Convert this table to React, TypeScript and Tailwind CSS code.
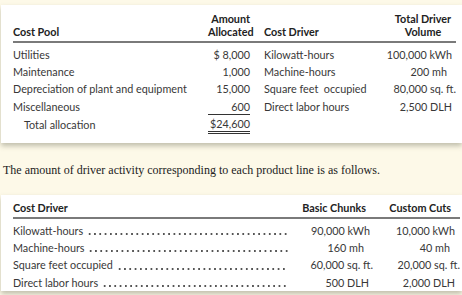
const costPools = [
  { pool: "Utilities", amount: "$ 8,000", driver: "Kilowatt-hours", volume: "100,000 kWh", volPad: "pr-[4px]" },
  { pool: "Maintenance", amount: "1,000", driver: "Machine-hours", volume: "200 mh", volPad: "pr-[9px]" },
  { pool: "Depreciation of plant and equipment", amount: "15,000", driver: "Square feet  occupied", volume: "80,000 sq. ft.", volPad: "pr-0" },
  { pool: "Miscellaneous", amount: "600", driver: "Direct labor hours", volume: "2,500 DLH", volPad: "pr-[4px]", under: true },
];

const activity = [
  { driver: "Kilowatt-hours", basic: "90,000 kWh", custom: "10,000 kWh", bPad: "pr-[3px]", cPad: "pr-[5px]" },
  { driver: "Machine-hours", basic: "160 mh", custom: "40 mh", bPad: "pr-[9px]", cPad: "pr-[10px]" },
  { driver: "Square feet occupied", basic: "60,000 sq. ft.", custom: "20,000 sq. ft.", bPad: "pr-0", cPad: "pr-0" },
  { driver: "Direct labor hours", basic: "500 DLH", custom: "2,000 DLH", bPad: "pr-[4px]", cPad: "pr-[5px]" },
];

export default function App() {
  return (
    <div className="h-[295px] w-[462px] overflow-hidden bg-[#fdf9e8] pt-[5px] pl-[1px] font-['Lato','Liberation_Sans',sans-serif] text-[10.8px] text-[#383838]">
      <div className="bg-white pl-[12px] pr-[6px] pt-[7px] pb-[9px] shadow-[0_3px_5px_rgba(120,120,100,0.45)]">
        <table className="w-full table-fixed border-collapse">
          <colgroup>
            <col className="w-[195px]" />
            <col className="w-[42px]" />
            <col />
            <col className="w-[72px]" />
          </colgroup>
          <thead>
            <tr className="border-b-2 border-[#7a7a7a] align-bottom font-bold leading-[13px] text-[#222]">
              <th className="pb-[3px] text-left">Cost Pool</th>
              <th className="whitespace-nowrap pb-[3px] text-right">
                Amount
                <br />
                Allocated
              </th>
              <th className="pl-[14px] pb-[3px] text-left">Cost Driver</th>
              <th className="whitespace-nowrap pb-[3px] pl-[6px] text-center">
                Total Driver
                <br />
                Volume
              </th>
            </tr>
          </thead>
          <tbody className="leading-[17.2px]">
            {costPools.map((r, i) => (
              <tr key={r.pool} className={i === 0 ? "[&>td]:pt-[3px]" : ""}>
                <td className="whitespace-nowrap">{r.pool}</td>
                <td className="whitespace-nowrap text-right">
                  <span className={r.under ? "inline-block w-[42px] border-b border-[#333] leading-[15px]" : ""}>{r.amount}</span>
                </td>
                <td className="whitespace-pre pl-[14px]">{r.driver}</td>
                <td className={`whitespace-nowrap text-right ${r.volPad}`}>{r.volume}</td>
              </tr>
            ))}
            <tr>
              <td className="pl-[11px]">Total allocation</td>
              <td className="text-right">
                <span className="inline-block w-[42px] border-b-[3px] border-double border-[#333] leading-[14px]">$24,600</span>
              </td>
              <td />
              <td />
            </tr>
          </tbody>
        </table>
      </div>

      <p className="mt-[20px] ml-[2px] font-['Liberation_Serif',serif] text-[12px] leading-[14px] text-[#222]">
        The amount of driver activity corresponding to each product line is as follows.
      </p>

      <div className="mt-[18px] bg-white pl-[12px] pr-[2px] pt-[4px] shadow-[0_3px_5px_rgba(120,120,100,0.45)]">
        <table className="w-full table-fixed border-collapse">
          <colgroup>
            <col />
            <col className="w-[82px]" />
            <col className="w-[87px]" />
          </colgroup>
          <thead>
            <tr className="border-b-2 border-[#7a7a7a] font-bold leading-[17px] text-[#222]">
              <th className="pb-[1px] text-left">Cost Driver</th>
              <th className="whitespace-nowrap pb-[1px] pr-[7px] text-right">Basic Chunks</th>
              <th className="whitespace-nowrap pb-[1px] pr-[9px] text-right">Custom Cuts</th>
            </tr>
          </thead>
          <tbody className="leading-[17.3px]">
            {activity.map((r, i) => (
              <tr key={r.driver} className={i === 0 ? "[&>td]:pt-[3px]" : ""}>
                <td>
                  <div className="flex w-[275px] items-end whitespace-nowrap">
                    <span className="pr-[4px]">{r.driver}</span>
                    <span className="mb-[4px] h-[2px] flex-1 bg-[radial-gradient(circle,#555_0.8px,transparent_1.1px)] bg-[length:5.3px_2px] bg-repeat-x" />
                  </div>
                </td>
                <td className={`whitespace-nowrap text-right ${r.bPad}`}>{r.basic}</td>
                <td className={`whitespace-nowrap text-right ${r.cPad}`}>{r.custom}</td>
              </tr>
            ))}
          </tbody>
        </table>
      </div>
    </div>
  );
}
